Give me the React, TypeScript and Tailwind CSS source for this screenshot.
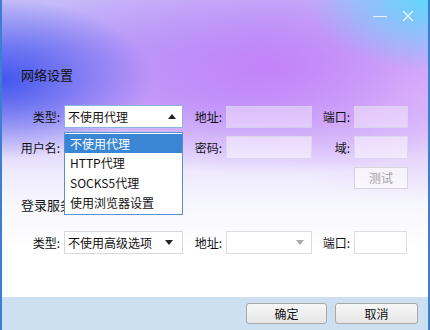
import React from 'react';

const font = { fontFamily: '"Microsoft YaHei", "Noto Sans CJK SC", "Noto Sans", sans-serif' };

function Arrow({ up, color = '#222' }: { up?: boolean; color?: string }) {
  return (
    <svg width="8" height="5" viewBox="0 0 8 5">
      {up ? <path d="M0 5 L4 0 L8 5 Z" fill={color} /> : <path d="M0 0 L8 0 L4 5 Z" fill={color} />}
    </svg>
  );
}

function Label({ w, children }: { w: string; children: React.ReactNode }) {
  return <div className={`${w} text-right pr-[4px] shrink-0`}>{children}</div>;
}

const proxyOptions = ['不使用代理', 'HTTP代理', 'SOCKS5代理', '使用浏览器设置'];

export default function App() {
  return (
    <div
      style={font}
      className="w-[430px] h-[330px] flex flex-col overflow-hidden border-x-2 border-[#3a7fd0] text-[12px] text-[#111] bg-[radial-gradient(120px_70px_at_100%_0%,#5fd6fb,transparent),radial-gradient(150px_80px_at_0%_24%,#4256ee,transparent),radial-gradient(260px_110px_at_62%_20%,#c482f9,transparent),radial-gradient(170px_110px_at_96%_28%,#e4c6fb,transparent),linear-gradient(to_bottom,#c5bcf9_0%,#b0a8f8_16%,#c0aaf9_30%,#dccffb_42%,#eeeafd_52%,#f7f7fe_62%,#ffffff_76%)]"
    >
      {/* title bar */}
      <div className="h-[65px] shrink-0 flex justify-end items-start gap-[15px] pr-[14px] pt-[9px]">
        <div className="w-[14px] h-[14px] flex items-center">
          <div className="w-[14px] h-[1px] bg-white/80" />
        </div>
        <svg width="12" height="12" viewBox="0 0 12 12" className="mt-[1px]">
          <path d="M1 1 L11 11 M11 1 L1 11" stroke="rgba(255,255,255,0.85)" strokeWidth="1.2" />
        </svg>
      </div>

      <div className="pl-[19px] text-[13px] leading-[20px]">网络设置</div>

      {/* row 1 */}
      <div className="flex items-center mt-[20px] h-[23px]">
        <Label w="w-[62px]">类型:</Label>
        <div className="relative w-[119px] h-[23px] shrink-0">
          <div className="h-full flex items-center justify-between pl-[3px] pr-[6px] bg-white border border-[#8bb3e0]">
            <span>不使用代理</span>
            <Arrow up />
          </div>
          <div className="absolute left-0 top-[27px] w-[119px] bg-white border border-[#5b8fcf] py-[1px] z-10">
            {proxyOptions.map((o, i) => (
              <div
                key={o}
                className={i === 0 ? 'h-[19px] leading-[19px] pl-[5px] bg-[#3a86d4] text-white' : 'h-[20px] leading-[20px] pl-[5px]'}
              >
                {o}
              </div>
            ))}
          </div>
        </div>
        <Label w="w-[43px]">地址:</Label>
        <div className="w-[86px] h-[22px] shrink-0 bg-white/40 border border-[#d6cdee]" />
        <Label w="w-[42px]">端口:</Label>
        <div className="w-[54px] h-[22px] shrink-0 bg-white/40 border border-[#dcd2ee]" />
      </div>

      {/* row 2 */}
      <div className="flex items-center mt-[8px] h-[23px]">
        <Label w="w-[62px]">用户名:</Label>
        <div className="w-[119px] shrink-0" />
        <Label w="w-[43px]">密码:</Label>
        <div className="w-[86px] h-[23px] shrink-0 bg-white/50 border border-[#dcd8ec]" />
        <Label w="w-[42px]">域:</Label>
        <div className="w-[54px] h-[23px] shrink-0 bg-white/50 border border-[#dcd8ec]" />
      </div>

      {/* test button */}
      <div className="flex justify-end pr-[20px] mt-[8px]">
        <div className="w-[54px] h-[22px] flex items-center justify-center bg-white/60 border border-[#d6d6dc] text-[#a3a3a3]">
          测试
        </div>
      </div>

      <div className="pl-[19px] mt-[6px] text-[13px] leading-[20px]">登录服务器</div>

      {/* row 3 */}
      <div className="flex items-center mt-[16px] h-[23px]">
        <Label w="w-[62px]">类型:</Label>
        <div className="w-[119px] h-[23px] shrink-0 flex items-center justify-between pl-[3px] pr-[9px] bg-white border border-[#d9d9d9]">
          <span>不使用高级选项</span>
          <Arrow />
        </div>
        <Label w="w-[43px]">地址:</Label>
        <div className="w-[86px] h-[23px] shrink-0 flex items-center justify-end pr-[7px] bg-white border border-[#dedede]">
          <Arrow color="#a8a8a8" />
        </div>
        <Label w="w-[42px]">端口:</Label>
        <div className="w-[53px] h-[23px] shrink-0 bg-white border border-[#dedede]" />
      </div>

      {/* footer */}
      <div className="mt-auto h-[33px] shrink-0 bg-[#cde0f2] flex justify-end items-start gap-[8px] pr-[10px] pt-[6px]">
        <div className="w-[81px] h-[21px] flex items-center justify-center rounded-[3px] border border-[#a9a9a9] bg-[linear-gradient(to_bottom,#f7f7f7,#e6e6e6)]">
          确定
        </div>
        <div className="w-[83px] h-[21px] flex items-center justify-center rounded-[3px] border border-[#a9a9a9] bg-[linear-gradient(to_bottom,#f7f7f7,#e6e6e6)]">
          取消
        </div>
      </div>
    </div>
  );
}
